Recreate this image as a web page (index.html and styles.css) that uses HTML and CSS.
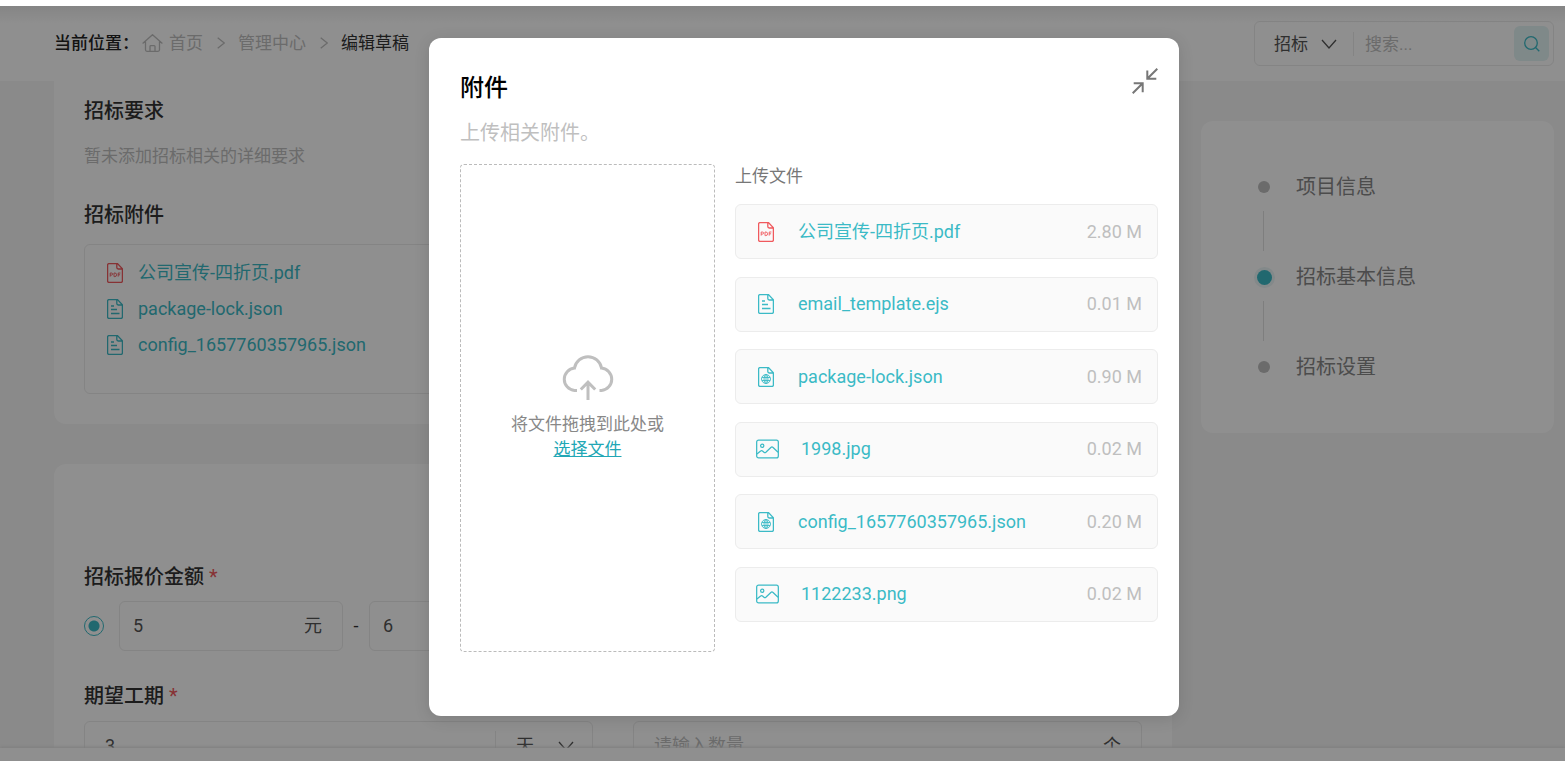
FILE: index.html
```html
<!DOCTYPE html>
<html lang="zh-CN">
<head>
<meta charset="utf-8">
<meta name="viewport" content="width=device-width, initial-scale=1">
<title>编辑草稿</title>
<link rel="stylesheet" href="styles.css">
</head>
<body>
<svg class="sprite" aria-hidden="true">
  <symbol id="i-pdf" viewBox="0 0 16 20">
    <path d="M10.500.6H2A1.400 1.400 0 0 0 .6 2v16A1.400 1.400 0 0 0 2 19.400h12a1.400 1.400 0 0 0 1.400-1.400V5.800zM9.800.8v3.800a1.400 1.400 0 0 0 1.400 1.400h4"/>
    <path class="thin" d="M3.200 13.600V10h1.300a1 1 0 0 1 0 2.100H3.200M7 10v3.600h.8a1.600 1.600 0 0 0 0-3.600zM11.200 13.600V10h2.200M11.200 11.800h1.900"/>
  </symbol>
  <symbol id="i-doc" viewBox="0 0 16 20">
    <path d="M10.500.6H2A1.400 1.400 0 0 0 .6 2v16A1.400 1.400 0 0 0 2 19.400h12a1.400 1.400 0 0 0 1.400-1.400V5.800zM9.800.8v3.800a1.400 1.400 0 0 0 1.400 1.400h4M4 7h3M4 10.500h6M4 14.500h8.500"/>
  </symbol>
  <symbol id="i-web" viewBox="0 0 16 20">
    <path d="M10.500.6H2A1.400 1.400 0 0 0 .6 2v16A1.400 1.400 0 0 0 2 19.400h12a1.400 1.400 0 0 0 1.400-1.400V5.800zM9.800.8v3.800a1.400 1.400 0 0 0 1.400 1.400h4"/>
    <circle class="thin" cx="8" cy="12" r="4.500"/>
    <ellipse class="thin" cx="8" cy="12" rx="2" ry="4.500"/>
    <path class="thin" d="M4 10.500h8M4 13.500h8M8 7.500v9"/>
  </symbol>
  <symbol id="i-img" viewBox="0 0 24 20">
    <rect x=".7" y=".7" width="22.600" height="18.600" rx="2"/>
    <circle cx="6.500" cy="6.700" r="1.700"/>
    <path d="M1 15.300l3.800-3.200a1.500 1.500 0 0 1 2 0l1.500 1.300a1.500 1.500 0 0 0 2 0l5.200-5a1.700 1.700 0 0 1 2.300 0l5.200 5"/>
  </symbol>
  <symbol id="i-down" viewBox="0 0 16 10"><path d="M1 1l7 8 7-8"/></symbol>
  <symbol id="i-right" viewBox="0 0 8 12"><path d="M.7.7L7.300 6 .7 11.300"/></symbol>
</svg>

<div class="app">
  <header class="topbar">
    <nav class="crumbs" aria-label="当前位置">
      <strong>当前位置：</strong>
      <a class="home" href="#">
        <svg class="icon home-icon" viewBox="0 0 21 18"><path d="M.6 9.500L10.500.7l9.900 8.800M3.500 7.500v8.300a1.500 1.500 0 0 0 1.500 1.500h11a1.500 1.500 0 0 0 1.500-1.500V7.500M8 17v-4.500a.8.8 0 0 1 .8-.8h3.400a.8.8 0 0 1 .8.8V17"/></svg>首页</a>
      <svg class="icon sep"><use href="#i-right"/></svg>
      <a href="#">管理中心</a>
      <svg class="icon sep"><use href="#i-right"/></svg>
      <span class="current">编辑草稿</span>
    </nav>
    <form class="search">
      <div class="pick">
        <select aria-label="搜索类型"><option>招标</option></select>
        <svg class="icon chevron"><use href="#i-down"/></svg>
      </div>
      <input type="text" placeholder="搜索..." aria-label="搜索">
      <button type="button" aria-label="搜索">
        <svg class="icon search-icon" viewBox="0 0 16 16"><circle cx="7" cy="7" r="6.300"/><path d="M11.500 11.500l3.800 3.800"/></svg>
      </button>
    </form>
  </header>

  <div class="content">
    <main class="main">
      <section class="card card-first">
        <h2>招标要求</h2>
        <p class="empty">暂未添加招标相关的详细要求</p>
        <h2>招标附件</h2>
        <ul class="attached">
          <li><svg class="icon file pdf"><use href="#i-pdf"/></svg><a href="#">公司宣传-四折页.pdf</a></li>
          <li><svg class="icon file"><use href="#i-doc"/></svg><a href="#">package-lock.json</a></li>
          <li><svg class="icon file"><use href="#i-doc"/></svg><a href="#">config_1657760357965.json</a></li>
        </ul>
      </section>

      <form class="card card-form">
        <div class="field first-row">
          <label for="price-min">招标报价金额 <span class="req">*</span></label>
          <div class="range">
            <input class="radio" type="radio" name="mode" checked aria-label="报价区间">
            <div class="box"><input id="price-min" type="text" value="5"><span>元</span></div>
            <span class="dash">-</span>
            <div class="box"><input type="text" value="6" aria-label="最高报价"></div>
          </div>
        </div>
        <div class="field row-two">
          <label for="days">期望工期 <span class="req">*</span></label>
          <div class="box wide">
            <input id="days" type="text" value="3">
            <div class="pick unit">
              <select aria-label="单位"><option>天</option></select>
              <svg class="icon chevron"><use href="#i-down"/></svg>
            </div>
          </div>
        </div>
        <div class="field row-two">
          <div class="box wide"><input type="text" placeholder="请输入数量" aria-label="数量"><span>个</span></div>
        </div>
      </form>
    </main>

    <aside class="card steps-card">
      <ol class="steps">
        <li><i class="dot"></i>项目信息</li>
        <li class="active"><i class="dot"></i>招标基本信息</li>
        <li><i class="dot"></i>招标设置</li>
      </ol>
    </aside>
  </div>
  <footer class="bottombar"></footer>

  <div class="overlay">
    <section class="modal" role="dialog" aria-labelledby="dlg-title">
      <div class="modal-head">
        <h1 id="dlg-title">附件</h1>
        <button class="collapse" type="button" aria-label="收起">
          <svg class="icon" viewBox="0 0 26 26"><path d="M25.300.7l-10 10M15.300 2.500v8.300h9M.7 25.300l10-10M1.700 15.200h9v9"/></svg>
        </button>
      </div>
      <p class="hint">上传相关附件。</p>
      <div class="modal-body">
        <div class="drop">
          <svg class="icon cloud" viewBox="0 0 52 46"><path d="M15 36.500H12.500A11.300 11.300 0 0 1 12.500 14a13.700 13.700 0 0 1 27 0A11.300 11.300 0 0 1 39.500 36.500H37.500M26 46V28M18.800 35.500l7.200-7.300 7.200 7.300"/></svg>
          <p>将文件拖拽到此处或</p>
          <a href="#">选择文件</a>
        </div>
        <div class="uploads">
          <h3>上传文件</h3>
          <ul>
            <li><svg class="icon file pdf"><use href="#i-pdf"/></svg><a href="#">公司宣传-四折页.pdf</a><span>2.80 M</span></li>
            <li><svg class="icon file"><use href="#i-doc"/></svg><a href="#">email_template.ejs</a><span>0.01 M</span></li>
            <li><svg class="icon file"><use href="#i-web"/></svg><a href="#">package-lock.json</a><span>0.90 M</span></li>
            <li class="image"><svg class="icon picture"><use href="#i-img"/></svg><a href="#">1998.jpg</a><span>0.02 M</span></li>
            <li><svg class="icon file"><use href="#i-web"/></svg><a href="#">config_1657760357965.json</a><span>0.20 M</span></li>
            <li class="image"><svg class="icon picture"><use href="#i-img"/></svg><a href="#">1122233.png</a><span>0.02 M</span></li>
          </ul>
        </div>
      </div>
    </section>
  </div>
</div>
</body>
</html>
```
FILE: styles.css
```css
:root {
  --teal: #3bbac6;
  --red: #f0595d;
  --line: #ebebeb;
  --muted: #bfbfbf;
}
* { box-sizing: border-box; margin: 0; padding: 0; }
body {
  height: 100vh;
  padding-top: 6px;
  overflow: hidden;
  background: #fff;
  color: #333;
  font: 18px/24px Roboto, "Noto Sans CJK SC", sans-serif;
}
ul, ol { list-style: none; }
a { color: var(--teal); text-decoration: none; }
input, select, button { font: inherit; color: inherit; border: 0; background: none; outline: 0; appearance: none; min-width: 0; }
::placeholder { color: var(--muted); opacity: 1; }
.sprite { display: none; }
.icon { fill: none; stroke: currentColor; stroke-width: 1.3; flex: none; }
.thin { stroke-width: 0.9; }

.app { position: relative; height: 100%; display: flex; flex-direction: column; background: #f6f6f6; }
.topbar { flex: none; height: 75px; padding: 0 11px 0 54px; display: flex; align-items: center; justify-content: space-between; background: #fff; }
.crumbs { display: flex; align-items: center; padding-bottom: 2px; font-size: 17px; }
.crumbs strong { font-weight: 500; color: #222; width: 88px; white-space: nowrap; }
.crumbs a { color: var(--muted); }
.crumbs .current { color: #333; }
.home { display: flex; align-items: center; gap: 6px; }
.home-icon { width: 21px; height: 18px; }
.sep { width: 8px; height: 12px; margin: 0 13px 0 14px; color: var(--muted); }
.search { width: 300px; height: 45px; padding: 0 4px 0 19px; display: flex; align-items: center; border: 1px solid var(--line); border-radius: 6px; font-size: 17px; }
.pick { display: flex; align-items: center; gap: 13px; color: #555; }
.chevron { width: 16px; height: 10px; pointer-events: none; }
.search .pick { padding-right: 16px; border-right: 1px solid var(--line); }
.search > input { flex: 1; padding-left: 11px; }
.search button { width: 35px; height: 35px; display: grid; place-items: center; border-radius: 6px; background: #e2f4f5; color: var(--teal); }
.search-icon { width: 16px; height: 16px; }

.content { flex: 1; min-height: 0; overflow: hidden; padding: 0 11px 0 54px; display: flex; align-items: flex-start; gap: 29px; }
.main { flex: 1; min-width: 0; }
.card { background: #fff; border-radius: 12px; }
.card-first { padding: 15px 30px 30px; border-radius: 0 0 12px 12px; }
h2, label { display: block; font-size: 20px; line-height: 30px; font-weight: 500; color: #333; }
.empty { margin: 18px 0 32px; font-size: 17px; color: var(--muted); }
.attached { height: 150px; margin-top: 14px; padding: 10px 22px; border: 1px solid var(--line); border-radius: 6px; }
.attached li { display: flex; align-items: center; gap: 15px; height: 36px; color: var(--teal); }
.file { width: 16px; height: 20px; }
.pdf { color: var(--red); }

.card-form { margin-top: 40px; padding: 98px 30px 30px; display: grid; grid-template-columns: repeat(2, minmax(0, 1fr)); column-gap: 40px; }
.first-row { grid-column: 1 / -1; width: calc(50% - 20px); }
.req { color: var(--red); font-weight: 400; }
.range { display: flex; align-items: center; margin-top: 9px; }
.radio { flex: none; width: 20px; height: 20px; margin-right: 15px; border: 1px solid var(--teal); border-radius: 50%; background: radial-gradient(circle, var(--teal) 5px, transparent 6px); }
.dash { width: 26px; text-align: center; }
.box { flex: 1; min-width: 0; height: 50px; padding: 0 20px 0 13px; display: flex; align-items: center; border: 1px solid var(--line); border-radius: 6px; color: #555; }
.box > input { flex: 1; }
.box.wide { padding-left: 20px; }
.row-two { margin-top: 30px; align-self: end; }
.row-two label { margin-bottom: 10px; }
.unit { height: 30px; padding-left: 20px; gap: 24px; border-left: 1px solid var(--line); }
.box.wide .unit { margin-right: -2px; }

.steps-card { flex: none; width: 353px; margin-top: 40px; padding: 51px 57px; }
.steps { display: grid; gap: 60px; font-size: 20px; line-height: 30px; color: #888; }
.steps-card { padding-bottom: 51px; }
.steps li { position: relative; display: flex; align-items: center; gap: 32px; }
.steps li:not(:last-child)::after { content: ""; position: absolute; left: 5px; top: 39px; height: 40px; border-left: 1px solid #e0e0e0; }
.dot { width: 12px; height: 12px; margin-right: -6px; border-radius: 50%; background: var(--muted); }
.steps .active .dot { width: 15px; height: 15px; margin: 0 -8px 0 -1px; background: var(--teal); box-shadow: 0 0 0 3px #eaf5f6; }
.bottombar { flex: none; height: 13px; background: #fff; box-shadow: 0 -1px 3px #e0e0e0; }

.overlay {
  position: absolute;
  inset: 0;
  padding: 32px 0 0 43px;
  display: flex;
  justify-content: center;
  align-items: flex-start;
  background: linear-gradient(rgba(0, 0, 0, 0.07), transparent 18px), rgba(0, 0, 0, 0.44);
}
.modal { width: 750px; padding: 30px 21px 64px 31px; background: #fff; border-radius: 12px; box-shadow: 0 3px 16px rgba(0, 0, 0, 0.12); }
.modal-head { display: flex; justify-content: space-between; align-items: flex-start; }
h1 { font-size: 24px; line-height: 40px; font-weight: 500; color: #000; }
.collapse { width: 26px; height: 26px; color: #777; }
.collapse .icon { display: block; width: 26px; height: 26px; stroke-width: 2; }
.hint { margin: 10px 0 16px; font-size: 20px; line-height: 30px; color: var(--muted); }
.modal-body { display: grid; grid-template-columns: 255px 1fr; gap: 20px; }
.drop { height: 488px; display: flex; flex-direction: column; align-items: center; justify-content: center; font-size: 17px; line-height: 25px; color: #888; border: 1px dashed #bbb; border-radius: 4px; }
.drop a { color: #22a7b5; text-decoration: underline; }
.cloud { width: 52px; height: 46px; margin-bottom: 12px; color: var(--muted); stroke-width: 3; }
.uploads { display: flex; flex-direction: column; padding-bottom: 30px; }
h3 { height: 40px; font-size: 17px; line-height: 24px; font-weight: 400; color: #777; }
.uploads ul { flex: 1; display: flex; flex-direction: column; justify-content: space-between; }
.uploads li { height: 55px; padding: 0 15px 0 22px; display: flex; align-items: center; gap: 24px; color: var(--teal); background: #fafafa; border: 1px solid #ececec; border-radius: 6px; }
.uploads .image { gap: 22px; padding-left: 20px; }
.picture { width: 23px; height: 20px; }
.uploads span { margin-left: auto; color: var(--muted); }
```
